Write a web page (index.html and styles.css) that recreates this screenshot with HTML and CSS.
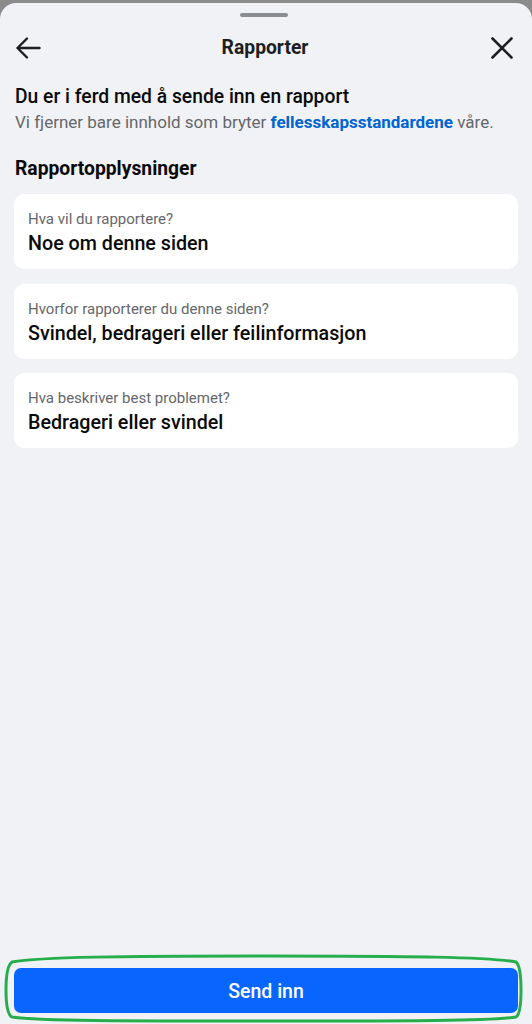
FILE: index.html
```html
<!DOCTYPE html>
<html lang="no">
<head>
<meta charset="utf-8">
<title>Rapporter</title>
<link rel="stylesheet" href="styles.css">
</head>
<body>
<div class="sheet">
  <div class="handle"></div>
  <header class="topbar">
    <button class="icon-btn" aria-label="Tilbake">
      <svg width="26" height="24" viewBox="0 0 26 24"><path d="M24.5 12H2.5M12 2.5L2.5 12l9.5 9.5" fill="none" stroke="#1c1e21" stroke-width="2.4" stroke-linecap="round" stroke-linejoin="round"/></svg>
    </button>
    <h1 class="title">Rapporter</h1>
    <button class="icon-btn" aria-label="Lukk">
      <svg width="24" height="24" viewBox="0 0 24 24"><path d="M2.5 2.5l19 19M21.5 2.5l-19 19" fill="none" stroke="#1c1e21" stroke-width="2.6" stroke-linecap="round"/></svg>
    </button>
  </header>

  <main class="content">
    <section class="intro">
      <h2 class="heading">Du er i ferd med å sende inn en rapport</h2>
      <p class="sub">Vi fjerner bare innhold som bryter <a class="link" href="#">fellesskapsstandardene</a> våre.</p>
    </section>

    <h3 class="section-title">Rapportopplysninger</h3>

    <div class="cards">
      <div class="card">
        <div class="card-label">Hva vil du rapportere?</div>
        <div class="card-value">Noe om denne siden</div>
      </div>
      <div class="card">
        <div class="card-label">Hvorfor rapporterer du denne siden?</div>
        <div class="card-value">Svindel, bedrageri eller feilinformasjon</div>
      </div>
      <div class="card">
        <div class="card-label">Hva beskriver best problemet?</div>
        <div class="card-value">Bedrageri eller svindel</div>
      </div>
    </div>
  </main>

  <footer class="footer">
    <button class="submit">Send inn</button>
  </footer>
</div>
<svg class="annotation" width="532" height="1024" viewBox="0 0 532 1024">
  <path d="M12 962 C40 957 120 956 264 956 C410 956 490 957 516 962 Q521 966 521 990 Q521 1014 516 1017 C490 1021 410 1021 264 1021 C120 1021 40 1021 12 1017 Q6 1014 6 990 Q6 966 12 962 Z" fill="none" stroke="#27ae4c" stroke-width="3"/>
</svg>
</body>
</html>
```

FILE: styles.css
```css
* { box-sizing: border-box; }

html, body {
  margin: 0;
  padding: 0;
}

body {
  position: relative;
  width: 532px;
  height: 1024px;
  overflow: hidden;
  background: #8b8b8b;
  font-family: Roboto, "Liberation Sans", Arial, sans-serif;
  color: #1c1e21;
}

.sheet {
  margin-top: 3px;
  height: 1021px;
  background: #f1f2f6;
  border-radius: 16px 16px 0 0;
  display: flex;
  flex-direction: column;
}

.handle {
  align-self: center;
  width: 48px;
  height: 4px;
  margin-top: 10px;
  margin-left: -4px;
  border-radius: 2px;
  background: #8a8d91;
}

.topbar {
  height: 46px;
  margin-top: 8px;
  padding: 0 16px 0 14px;
  display: flex;
  align-items: center;
  justify-content: space-between;
}

.icon-btn {
  width: 28px;
  height: 28px;
  padding: 0;
  border: 0;
  background: none;
  display: flex;
  align-items: center;
  justify-content: center;
}

.title {
  margin: 0;
  font-size: 19.3px;
  font-weight: 700;
  line-height: 24px;
}

.content {
  flex: 1;
  padding: 14px 14px 0 15px;
}

.heading {
  margin: 0;
  font-size: 19.3px;
  font-weight: 500;
  line-height: 24px;
  color: #0a0a0a;
}

.sub {
  margin: 3px 0 0;
  font-size: 17px;
  line-height: 21px;
  color: #65676b;
}

.link {
  color: #0064d1;
  font-weight: 700;
  text-decoration: none;
}

.section-title {
  margin: 24px 0 0;
  font-size: 19.3px;
  font-weight: 700;
  line-height: 24px;
  color: #0a0a0a;
}

.cards {
  margin: 13px 0 0 -1px;
  display: flex;
  flex-direction: column;
  gap: 14.5px;
}

.card {
  background: #ffffff;
  border-radius: 10px;
  padding: 16px 14px 13px;
}

.card-label {
  font-size: 15px;
  line-height: 18px;
  color: #65676b;
}

.card-value {
  margin-top: 4px;
  font-size: 19.7px;
  font-weight: 500;
  line-height: 24px;
  color: #0a0a0a;
}

.footer {
  padding: 0 14px 11px;
}

.submit {
  width: 100%;
  height: 45px;
  padding: 2px 0 0;
  border: 0;
  border-radius: 7px;
  background: #0866ff;
  color: #ffffff;
  font-family: Roboto, "Liberation Sans", Arial, sans-serif;
  font-size: 19.5px;
  font-weight: 500;
}

.annotation {
  position: absolute;
  top: 0;
  left: 0;
  pointer-events: none;
}
```
